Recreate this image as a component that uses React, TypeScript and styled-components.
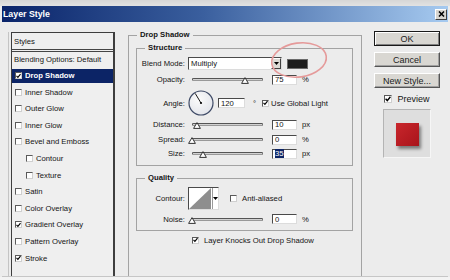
import React from 'react';
import styled, { createGlobalStyle } from 'styled-components';

const GlobalStyle = createGlobalStyle`
  html, body {
    margin: 0;
    padding: 0;
    background: #ececec;
  }
  body {
    font-family: 'Liberation Sans', Arial, sans-serif;
    font-size: 7.7px;
    color: #141414;
    overflow: hidden;
  }
`;

const Window = styled.div`
  position: relative;
  width: 450px;
  height: 280px;
  box-sizing: border-box;
  padding: 6px 2px 0;
  overflow: hidden;
  background: linear-gradient(#d6d6d6, #e2e2e2 6px, #ececec 6px);
  display: flex;
  flex-direction: column;
  border-bottom: 3px solid #f3f3f3;
`;

const TitleBar = styled.div`
  height: 16px;
  flex: none;
  display: flex;
  align-items: center;
  justify-content: space-between;
  padding: 0 1px;
  background: linear-gradient(90deg, #0a246a 0%, #3a5f9e 45%, #a6caf0 100%);
`;

const Title = styled.span`
  color: #fff;
  font-weight: bold;
  font-size: 8.8px;
`;

const CloseButton = styled.div`
  width: 12px;
  height: 11px;
  box-sizing: border-box;
  display: flex;
  align-items: center;
  justify-content: center;
  background: #d8d6d0;
  border: 1px solid;
  border-color: #fff #404040 #404040 #fff;
`;

const Body = styled.div`
  flex: 1;
  display: flex;
  align-items: flex-start;
  padding: 8px 0 0 9px;
  overflow: hidden;
  border-bottom: 1px solid #c6c6c6;
`;

/* ---------- left list ---------- */

const StyleList = styled.div`
  width: 104px;
  height: 260px;
  margin-top: 2px;
  flex: none;
  box-sizing: border-box;
  border: 1px solid #3e3e3e;
  border-right-width: 2px;
  background: #efefef;
  box-shadow: -2px 0 0 #ececec, -3px 0 0 #c4c4c4;
  display: flex;
  flex-direction: column;
  gap: 2.6px;
`;

const ListHeader = styled.div`
  height: 16px;
  flex: none;
  display: flex;
  align-items: center;
  padding-left: 2px;
  border-bottom: 3px double #454545;
  margin-bottom: -2.6px;
`;

const StyleItem = styled.div<{ $selected?: boolean; $indent?: number }>`
  height: 14px;
  flex: none;
  display: flex;
  align-items: center;
  gap: 3px;
  padding-left: ${(p) => p.$indent ?? 3}px;
  background: ${(p) => (p.$selected ? '#0c2466' : 'transparent')};
  color: ${(p) => (p.$selected ? '#fff' : '#141414')};
  font-weight: ${(p) => (p.$selected ? 'bold' : 'normal')};
  white-space: nowrap;
`;

const Box = styled.span<{ $size?: number }>`
  width: ${(p) => p.$size ?? 7}px;
  height: ${(p) => p.$size ?? 7}px;
  flex: none;
  box-sizing: border-box;
  background: #fff;
  border: 1px solid;
  border-color: #5a5a5a #cfcfcf #cfcfcf #5a5a5a;
  display: flex;
  align-items: center;
  justify-content: center;
`;

const CheckBox = ({ checked, size }: { checked?: boolean; size?: number }) => (
  <Box $size={size}>
    {checked && (
      <svg width="6" height="6" viewBox="0 0 6 6">
        <path d="M0.6 2.8 L2.3 4.6 L5.4 0.8" fill="none" stroke="#000" strokeWidth="1.4" />
      </svg>
    )}
  </Box>
);

/* ---------- main group ---------- */

const Group = styled.fieldset<{ $pad?: string; $mt?: number }>`
  margin: ${(p) => p.$mt ?? 0}px 0 0;
  padding: ${(p) => p.$pad ?? '0'};
  border: 1px solid #a3a3a3;
  min-width: 0;
`;

const Legend = styled.legend<{ $ml?: number }>`
  padding: 0 3px;
  margin-left: ${(p) => p.$ml ?? 0}px;
  font-weight: bold;
  line-height: 10px;
  color: #141414;
`;

const MainGroup = styled(Group)`
  width: 234px;
  height: 270px;
  box-sizing: border-box;
  flex: none;
  margin-left: 13px;
  margin-right: 12px;
`;

const Row = styled.div<{ $h: number; $mt: number; $pl?: number }>`
  display: flex;
  align-items: center;
  height: ${(p) => p.$h}px;
  margin-top: ${(p) => p.$mt}px;
  padding-left: ${(p) => p.$pl ?? 0}px;
  white-space: nowrap;
`;

const Label = styled.span`
  width: 48px;
  flex: none;
  text-align: right;
  margin-right: 3px;
`;

const sunken = `
  background: #fff;
  box-sizing: border-box;
  border: 1px solid;
  border-color: #4a4a4a #dcdcdc #dcdcdc #4a4a4a;
`;

const Select = styled.div`
  ${sunken}
  width: 94px;
  height: 13px;
  display: flex;
  align-items: center;
  justify-content: space-between;
  padding-left: 2px;
`;

const ArrowButton = styled.div`
  width: 10px;
  height: 100%;
  box-sizing: border-box;
  background: #dcdad5;
  border: 1px solid;
  border-color: #fff #404040 #404040 #fff;
  display: flex;
  align-items: center;
  justify-content: center;
`;

const DownArrow = () => (
  <svg width="5" height="3" viewBox="0 0 5 3">
    <path d="M0 0 H5 L2.5 3 Z" fill="#000" />
  </svg>
);

const Swatch = styled.div`
  width: 21px;
  height: 10px;
  margin-left: 5px;
  background: #1d1d1d;
  border: 1px solid #6a6a6a;
  box-sizing: border-box;
`;

const SliderWrap = styled.div`
  position: relative;
  width: 71px;
  height: 9px;
  margin-left: 4px;
  flex: none;
  display: flex;
  align-items: center;
`;

const Track = styled.div`
  width: 100%;
  height: 3px;
  box-sizing: border-box;
  background: #d2d2d2;
  border: 1px solid;
  border-color: #555 #777 #999 #555;
  border-radius: 2px 0 0 2px;
`;

const Thumb = styled.svg`
  position: absolute;
  bottom: 0;
  margin-left: -4px;
`;

const Slider = ({ pct }: { pct: number }) => (
  <SliderWrap>
    <Track />
    <Thumb width="8" height="7" viewBox="0 0 8 7" style={{ left: `${pct}%` }}>
      <path d="M4 0.6 L7.4 6.4 H0.6 Z" fill="#fff" stroke="#333" strokeWidth="1" />
    </Thumb>
  </SliderWrap>
);

const Input = styled.div<{ $w?: number; $ml?: number }>`
  ${sunken}
  width: ${(p) => p.$w ?? 25}px;
  height: 10px;
  margin-left: ${(p) => p.$ml ?? 9}px;
  padding-left: 2px;
  display: flex;
  align-items: center;
`;

const Selected = styled.span`
  background: #0c2466;
  color: #fff;
`;

const Unit = styled.span<{ $ml?: number }>`
  margin-left: ${(p) => p.$ml ?? 5}px;
`;

const Spacer = styled.span<{ $w: number }>`
  width: ${(p) => p.$w}px;
  flex: none;
`;

const Dial = () => (
  <svg width="26" height="26" viewBox="0 0 26 26">
    <defs>
      <radialGradient id="dialFill" cx="40%" cy="35%" r="70%">
        <stop offset="0" stopColor="#fbfbfb" />
        <stop offset="1" stopColor="#e2e4ea" />
      </radialGradient>
    </defs>
    <circle cx="13" cy="13" r="12" fill="url(#dialFill)" stroke="#3e4a66" strokeWidth="1.2" />
    <line x1="13" y1="13" x2="7.2" y2="3.4" stroke="#1a1a1a" strokeWidth="1" />
    <circle cx="13" cy="13" r="1.1" fill="#000" />
  </svg>
);

const ContourPicker = styled.div`
  ${sunken}
  width: 31px;
  height: 23px;
  display: flex;
`;

const ContourPreview = styled.div`
  width: 23px;
  height: 100%;
  border-right: 1px solid #9a9a9a;
`;

const ContourArrow = styled.div`
  flex: 1;
  display: flex;
  align-items: center;
  justify-content: center;
`;

const CheckText = styled.span<{ $ml?: number }>`
  margin-left: ${(p) => p.$ml ?? 3}px;
`;

/* ---------- right column ---------- */

const Side = styled.div`
  width: 66px;
  flex: none;
  margin-top: 1px;
  display: flex;
  flex-direction: column;
  align-items: center;
  font-size: 9px;
`;

const Button = styled.div<{ $default?: boolean }>`
  width: 66px;
  height: 15px;
  box-sizing: border-box;
  margin-bottom: 6px;
  display: flex;
  align-items: center;
  justify-content: center;
  background: #d9d7d2;
  border: 1px solid;
  border-color: ${(p) => (p.$default ? '#1a1a1a' : '#fff #555 #555 #fff')};
  box-shadow: ${(p) =>
    p.$default ? 'inset 1px 1px 0 #fff, inset -1px -1px 0 #808080' : 'inset -1px -1px 0 #a0a0a0'};
  color: #222;
`;

const PreviewRow = styled.div`
  height: 10px;
  display: flex;
  align-items: center;
  gap: 5px;
`;

const PreviewBox = styled.div`
  width: 48px;
  height: 49px;
  margin-top: 5px;
  box-sizing: border-box;
  background: #dedede;
  border: 1px solid;
  border-color: #b4b4b4 #f6f6f6 #f6f6f6 #b4b4b4;
  display: flex;
  align-items: center;
  justify-content: center;
`;

const RedSquare = styled.div`
  width: 23px;
  height: 23px;
  margin: 2px 0 0 1px;
  background: linear-gradient(135deg, #c9262c, #a8141b);
  box-shadow: 2px 3px 3px rgba(0, 0, 0, 0.45);
`;

const Annotation = styled.svg`
  position: absolute;
  left: 268px;
  top: 39px;
  pointer-events: none;
`;

const listItems = [
  { name: 'Drop Shadow', checked: true, selected: true },
  { name: 'Inner Shadow' },
  { name: 'Outer Glow' },
  { name: 'Inner Glow' },
  { name: 'Bevel and Emboss' },
  { name: 'Contour', indent: 14 },
  { name: 'Texture', indent: 14 },
  { name: 'Satin' },
  { name: 'Color Overlay' },
  { name: 'Gradient Overlay', checked: true },
  { name: 'Pattern Overlay' },
  { name: 'Stroke', checked: true },
];

const sliders = [
  { label: 'Distance:', value: '10', pct: 7, unit: 'px', h: 11, mt: 3 },
  { label: 'Spread:', value: '0', pct: 0, unit: '%', h: 11, mt: 4 },
  { label: 'Size:', value: '35', pct: 16, unit: 'px', h: 11, mt: 3, selected: true },
];

export default function App() {
  return (
    <Window>
      <GlobalStyle />
      <TitleBar>
        <Title>Layer Style</Title>
        <CloseButton>
          <svg width="7" height="6" viewBox="0 0 7 6">
            <path d="M1 0.5 L6 5.5 M6 0.5 L1 5.5" stroke="#000" strokeWidth="1.5" />
          </svg>
        </CloseButton>
      </TitleBar>
      <Body>
        <StyleList>
          <ListHeader>Styles</ListHeader>
          <StyleItem $indent={2}>Blending Options: Default</StyleItem>
          {listItems.map((it) => (
            <StyleItem key={it.name} $selected={it.selected} $indent={it.indent}>
              <CheckBox checked={it.checked} />
              {it.name}
            </StyleItem>
          ))}
        </StyleList>

        <MainGroup $pad="0 8px 0 7px">
          <Legend $ml={1}>Drop Shadow</Legend>
          <Group $mt={3} $pad="0 0 6px">
            <Legend $ml={8}>Structure</Legend>
            <Row $h={13} $mt={4}>
              <Label>Blend Mode:</Label>
              <Select>
                Multiply
                <ArrowButton>
                  <DownArrow />
                </ArrowButton>
              </Select>
              <Swatch />
            </Row>
            <Row $h={11} $mt={4}>
              <Label>Opacity:</Label>
              <Slider pct={75} />
              <Input>75</Input>
              <Unit>%</Unit>
            </Row>
            <Row $h={26} $mt={5}>
              <Label>Angle:</Label>
              <Dial />
              <Input $w={27} $ml={4}>120</Input>
              <Unit $ml={8}>°</Unit>
              <Spacer $w={6} />
              <CheckBox checked />
              <CheckText $ml={2}>Use Global Light</CheckText>
            </Row>
            {sliders.map((s) => (
              <Row key={s.label} $h={s.h} $mt={s.mt}>
                <Label>{s.label}</Label>
                <Slider pct={s.pct} />
                <Input>{s.selected ? <Selected>{s.value}</Selected> : s.value}</Input>
                <Unit>{s.unit}</Unit>
              </Row>
            ))}
          </Group>

          <Group $mt={7} $pad="0 0 6px">
            <Legend $ml={8}>Quality</Legend>
            <Row $h={23} $mt={4}>
              <Label>Contour:</Label>
              <ContourPicker>
                <ContourPreview>
                  <svg width="22" height="21" viewBox="0 0 22 21">
                    <path d="M0 21 L22 0 V21 Z" fill="#8e8e8e" />
                  </svg>
                </ContourPreview>
                <ContourArrow>
                  <DownArrow />
                </ContourArrow>
              </ContourPicker>
              <Spacer $w={11} />
              <CheckBox />
              <CheckText $ml={5}>Anti-aliased</CheckText>
            </Row>
            <Row $h={10} $mt={4}>
              <Label>Noise:</Label>
              <Slider pct={0} />
              <Input>0</Input>
              <Unit>%</Unit>
            </Row>
          </Group>

          <Row $h={10} $mt={4} $pl={56}>
            <CheckBox checked />
            <CheckText $ml={5}>Layer Knocks Out Drop Shadow</CheckText>
          </Row>
        </MainGroup>

        <Side>
          <Button $default>OK</Button>
          <Button>Cancel</Button>
          <Button>New Style...</Button>
          <PreviewRow>
            <CheckBox checked size={8} />
            Preview
          </PreviewRow>
          <PreviewBox>
            <RedSquare />
          </PreviewBox>
        </Side>
      </Body>
      <Annotation width="64" height="42" viewBox="0 0 64 42">
        <ellipse cx="31" cy="21" rx="27.5" ry="17" fill="none" stroke="#e59a9a" strokeWidth="1.6" transform="rotate(-8 31 21)" />
      </Annotation>
    </Window>
  );
}
